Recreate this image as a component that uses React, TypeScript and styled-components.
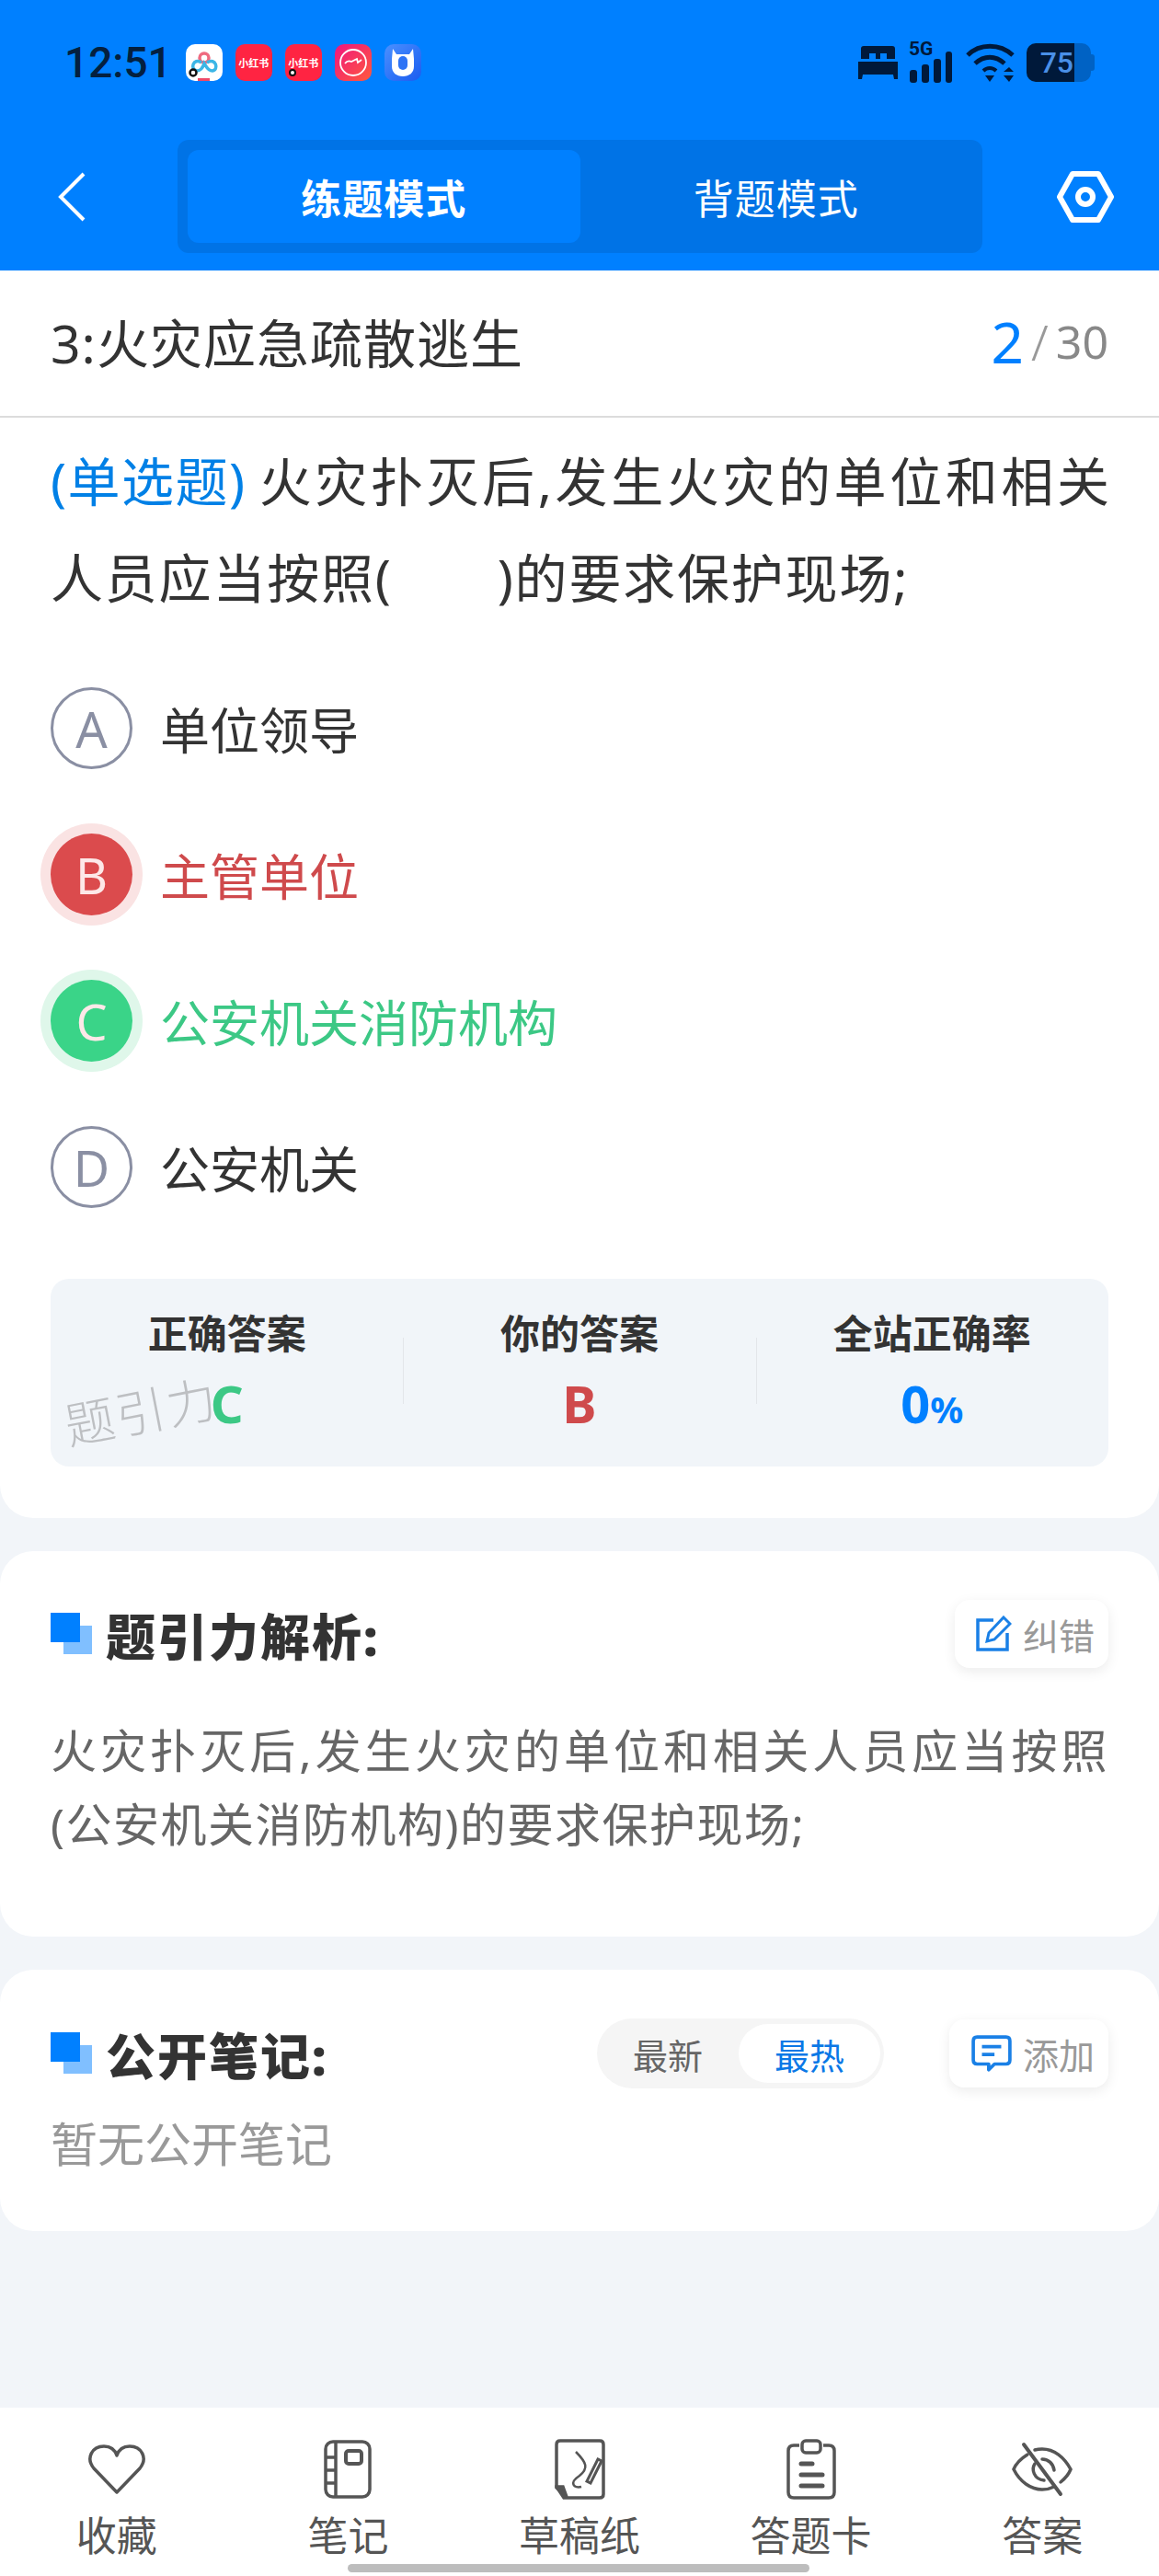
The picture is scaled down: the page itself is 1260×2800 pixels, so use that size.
import React from 'react'
import styled, { createGlobalStyle } from 'styled-components'

const FONT = `"Noto Sans", "Noto Sans CJK SC", sans-serif`

const GlobalStyle = createGlobalStyle`
  html, body { margin: 0; padding: 0; background: #f2f5f9; }
  * { box-sizing: border-box; }
  body { font-family: ${FONT}; }
`

const options = [
  { key: 'A', text: '单位领导', state: 'idle' },
  { key: 'B', text: '主管单位', state: 'wrong' },
  { key: 'C', text: '公安机关消防机构', state: 'right' },
  { key: 'D', text: '公安机关', state: 'idle' },
] as const

const tone = { idle: '#333333', wrong: '#cf4a4c', right: '#3cc885' }

const SectionMark = () => (
  <svg width="46" height="46" viewBox="0 0 46 46">
    <rect x="14" y="14" width="31" height="31" fill="#80bfff" />
    <rect x="0" y="0" width="32" height="32" fill="#0080ff" />
  </svg>
)

const Heart = () => (
  <svg width="64" height="58" viewBox="0 0 64 58" fill="none" stroke="#555" strokeWidth="3.5" strokeLinejoin="round">
    <path d="M32 54 L7 28 C-2 17 5 4 18 4 C25 4 30 8 32 14 C34 8 39 4 46 4 C59 4 66 17 57 28 Z" />
  </svg>
)

const Notebook = () => (
  <svg width="52" height="64" viewBox="0 0 52 64" fill="none" stroke="#555" strokeWidth="3.5">
    <rect x="2" y="2" width="48" height="60" rx="8" />
    <path d="M13 2 V62 M2 19 H13 M2 33 H13 M2 47 H13" />
    <rect x="24" y="12" width="17" height="14" rx="3" strokeWidth="4" />
  </svg>
)

const Draft = () => (
  <svg width="56" height="66" viewBox="0 0 56 66" fill="none" stroke="#555" strokeWidth="3.5">
    <path d="M11 64 H50 Q54 64 54 60 V6 Q54 2 50 2 H7 Q3 2 3 6 V52 Z" />
    <path d="M3 52 H10 L14 63 L3 53 Z" fill="#555" />
    <path d="M24 14 C36 26 38 32 28 40 C16 48 22 54 30 52" strokeWidth="2.5" />
    <path d="M52 24 L40 48 L36 46 L48 22 Z" strokeWidth="3" />
  </svg>
)

const AnswerCard = () => (
  <svg width="56" height="66" viewBox="0 0 56 66" fill="none" stroke="#555" strokeWidth="3.5">
    <path d="M15 7 H9 Q3 7 3 13 V58 Q3 64 9 64 H47 Q53 64 53 58 V13 Q53 7 47 7 H41" />
    <rect x="18" y="2" width="20" height="13" rx="4" strokeWidth="3.5" />
    <path d="M17 27 H29 M17 39 H40 M17 51 H40" strokeWidth="5" strokeLinecap="round" />
  </svg>
)

const EyeOff = () => (
  <svg width="68" height="60" viewBox="0 0 68 60" fill="none" stroke="#555" strokeWidth="3.5" strokeLinecap="round">
    <path d="M18 14 C10 19 5 25 3 30 C10 44 22 52 34 52 C39 52 43 51 47 49" />
    <path d="M26 9 C28.500 8.300 31 8 34 8 C47 8 58 17 65 30 C63 35 59 40 54 44" />
    <path d="M26 24 C22 30 25 41 36 42" />
    <path d="M34 19 C41 19 46 24 47 31" />
    <path d="M14 3 L54 57" strokeWidth="4" />
  </svg>
)

const navItems = [
  { label: '收藏', icon: <Heart /> },
  { label: '笔记', icon: <Notebook /> },
  { label: '草稿纸', icon: <Draft /> },
  { label: '答题卡', icon: <AnswerCard /> },
  { label: '答案', icon: <EyeOff /> },
]

const App = () => {
  return (
    <Page>
      <GlobalStyle />
      <Header>
        <StatusBar>
          <StatusLeft>
            <Time>12:51</Time>
            <AppIcons>
              <AppIcon $bg="#ffffff">
                <svg width="40" height="40" viewBox="0 0 40 40" fill="none">
                  <circle cx="20" cy="15" r="5" fill="#fff" stroke="#ef6a80" strokeWidth="3.500" />
                  <path d="M17 20 C8 14 4 28 12 29 C17 29 19 24 20 21 C22 24 24 29 29 29 C36 28 33 14 23 20" stroke="#3cb6e6" strokeWidth="3.500" />
                  <circle cx="8" cy="31" r="3.500" fill="#fff" stroke="#111" strokeWidth="2.500" />
                  <rect x="13" y="37" width="13" height="3" fill="#ef4a68" />
                </svg>
              </AppIcon>
              <AppIcon $bg="#ff2442"><RedText>小红书</RedText></AppIcon>
              <AppIcon $bg="#ff2442">
                <RedText>小红书</RedText>
                <Dot />
              </AppIcon>
              <AppIcon $bg="linear-gradient(135deg, #f0157f, #ff5a3c)">
                <svg width="40" height="40" viewBox="0 0 40 40" fill="none" stroke="#fff">
                  <circle cx="20" cy="20" r="14" strokeWidth="1.800" />
                  <path d="M11 21 Q14 17 18 19 L24 16 L25 20 L29 17" strokeWidth="1.800" />
                </svg>
              </AppIcon>
              <AppIcon $bg="linear-gradient(135deg, #4a90ff, #1a5cf0)">
                <svg width="40" height="40" viewBox="0 0 40 40" fill="none">
                  <path d="M9 5 L13 11 H27 L31 5 L32 16 V24 C32 31 27 35 20 35 C13 35 8 31 8 24 V16 Z" fill="#fff" />
                  <rect x="15" y="13" width="10" height="15" rx="5" fill="#2f74f5" />
                </svg>
              </AppIcon>
            </AppIcons>
          </StatusLeft>
          <StatusRight>
            <svg width="43" height="36" viewBox="0 0 43 36" fill="#00193a">
              <path d="M6 0 H37 Q40 0 40 3 V14 H31 V8 H24 V14 H19 V8 H12 V14 H3 V3 Q3 0 6 0 Z" />
              <path d="M0 17 H43 V36 H39 L38 31 H5 L4 36 H0 Z" />
            </svg>
            <SignalWrap>
              <SignalLabel>5G</SignalLabel>
              <svg width="48" height="34" viewBox="0 0 48 34" fill="#00193a">
                <rect x="1" y="20" width="8" height="14" rx="3" />
                <rect x="14" y="14" width="8" height="20" rx="3" />
                <rect x="27" y="8" width="8" height="26" rx="3" />
                <rect x="40" y="0" width="7" height="34" rx="3" />
              </svg>
            </SignalWrap>
            <svg width="54" height="44" viewBox="0 0 54 44" fill="none" stroke="#00193a" strokeWidth="5">
              <path d="M2 14 C15 1 37 1 51 14" />
              <path d="M10 23 C20 14 32 14 42 23" />
              <path d="M19 31 C23 27 29 27 33 31" strokeWidth="4" />
              <path d="M21 36 H31 L26 43 Z" fill="#00193a" stroke="none" />
              <path d="M41 31 L47 26 L52 31 Z M41 35 H52 L47 42 Z" transform="translate(0 1)" fill="#00193a" stroke="none" />
            </svg>
            <Battery>
              <BatteryFill>75</BatteryFill>
              <BatteryRest />
              <BatteryTip />
            </Battery>
          </StatusRight>
        </StatusBar>
        <NavRow>
          <BackButton>
            <svg width="30" height="54" viewBox="0 0 30 54" fill="none" stroke="#fff" strokeWidth="4">
              <path d="M28 2 L3 27 L28 52" />
            </svg>
          </BackButton>
          <ModeTabs>
            <ModeTab $active>练题模式</ModeTab>
            <ModeTab>背题模式</ModeTab>
          </ModeTabs>
          <SettingButton>
            <svg width="62" height="56" viewBox="0 0 62 56" fill="none" stroke="#fff" strokeWidth="6" strokeLinejoin="round">
              <path d="M17 3 H45 L59 28 L45 53 H17 L3 28 Z" />
              <circle cx="31" cy="28" r="8" />
            </svg>
          </SettingButton>
        </NavRow>
      </Header>

      <Content>
        <QuestionCard>
          <TitleRow>
            <ChapterTitle>3:火灾应急疏散逃生</ChapterTitle>
            <Counter>
              <CounterNow>2</CounterNow>
              <CounterSlash>/</CounterSlash>
              <CounterAll>30</CounterAll>
            </Counter>
          </TitleRow>
          <QuestionBody>
            <QuestionText>
              <QuestionType>(单选题)</QuestionType>火灾扑灭后,发生火灾的单位和相关<br />
              <LastLine $spacing={1.8}>人员应当按照(<QuestionBlank>　　</QuestionBlank>)的要求保护现场;</LastLine>
            </QuestionText>
            <OptionList>
              {options.map((o) => (
                <OptionRow key={o.key}>
                  <OptionBadge $state={o.state}>{o.key}</OptionBadge>
                  <OptionText $state={o.state}>{o.text}</OptionText>
                </OptionRow>
              ))}
            </OptionList>
            <StatsPanel>
              <StatCell>
                <StatLabel>正确答案</StatLabel>
                <StatValue $color="#3cc885">C</StatValue>
                <Watermark>题引力</Watermark>
              </StatCell>
              <StatCell $divider>
                <StatLabel>你的答案</StatLabel>
                <StatValue $color="#cf4a4c">B</StatValue>
              </StatCell>
              <StatCell $divider>
                <StatLabel>全站正确率</StatLabel>
                <StatValue $color="#0080ff">0<Percent>%</Percent></StatValue>
              </StatCell>
            </StatsPanel>
          </QuestionBody>
        </QuestionCard>

        <AnalysisCard>
          <SectionHead>
            <SectionTitle>
              <SectionMark />
              <SectionName>题引力解析:</SectionName>
            </SectionTitle>
            <ActionButton>
              <svg width="40" height="40" viewBox="0 0 40 40" fill="none" stroke="#1a80e6" strokeWidth="3.500">
                <path d="M20 5 H3 V37 H35 V19" />
                <path d="M31 2 L38 9 L21 26 L13 28 L15 19 Z" strokeWidth="3" />
              </svg>
              <ActionLabel>纠错</ActionLabel>
            </ActionButton>
          </SectionHead>
          <AnalysisText>
            火灾扑灭后,发生火灾的单位和相关人员应当按照<br />
            <LastLine $spacing={1.5}>(公安机关消防机构)的要求保护现场;</LastLine>
          </AnalysisText>
        </AnalysisCard>

        <NotesCard>
          <SectionHead>
            <SectionTitle>
              <SectionMark />
              <SectionName>公开笔记:</SectionName>
            </SectionTitle>
            <NotesActions>
              <SortToggle>
                <SortOption>最新</SortOption>
                <SortOption $active>最热</SortOption>
              </SortToggle>
              <ActionButton $wide>
                <svg width="44" height="40" viewBox="0 0 42 38" fill="none" stroke="#1a80e6" strokeWidth="3.500" strokeLinejoin="round">
                  <path d="M6 2 H36 Q40 2 40 6 V26 Q40 30 36 30 H24 L18 36 V30 H6 Q2 30 2 26 V6 Q2 2 6 2 Z" />
                  <path d="M11 12 H31 M11 20 H24" />
                </svg>
                <ActionLabel>添加</ActionLabel>
              </ActionButton>
            </NotesActions>
          </SectionHead>
          <EmptyNotes>暂无公开笔记</EmptyNotes>
        </NotesCard>
      </Content>

      <BottomBar>
        {navItems.map((item) => (
          <BottomItem key={item.label}>
            <BottomIcon>{item.icon}</BottomIcon>
            <BottomLabel>{item.label}</BottomLabel>
          </BottomItem>
        ))}
        <HomeIndicator />
      </BottomBar>
    </Page>
  )
}

export default App

const Page = styled.div`
  width: 1260px;
  height: 2800px;
  display: flex;
  flex-direction: column;
  background: #f2f5f9;
  overflow: hidden;
  font-family: ${FONT};
`
const Header = styled.div`
  height: 294px;
  background: #0080ff;
  flex-shrink: 0;
`
const StatusBar = styled.div`
  height: 136px;
  padding: 0 70px 0 70px;
  display: flex;
  align-items: center;
  justify-content: space-between;
`
const StatusLeft = styled.div`
  display: flex;
  align-items: center;
  gap: 15px;
`
const Time = styled.div`
  font-family: "Roboto", sans-serif;
  font-size: 46px;
  font-weight: 500;
  color: #04203f;
`
const AppIcons = styled.div`
  display: flex;
  gap: 14px;
`
const AppIcon = styled.div<{ $bg: string }>`
  width: 40px;
  height: 40px;
  border-radius: 10px;
  background: ${(p) => p.$bg};
  display: flex;
  align-items: center;
  justify-content: center;
  position: relative;
  overflow: hidden;
`
const RedText = styled.span`
  font-size: 11px;
  font-weight: 700;
  color: #fff;
  white-space: nowrap;
  font-family: "Noto Sans CJK SC", sans-serif;
`
const Dot = styled.span`
  position: absolute;
  left: 4px;
  bottom: 5px;
  width: 8px;
  height: 8px;
  border-radius: 50%;
  background: #fff;
  border: 2px solid #111;
`
const StatusRight = styled.div`
  display: flex;
  align-items: center;
  gap: 12px;
`
const SignalWrap = styled.div`
  width: 50px;
  height: 44px;
  display: flex;
  align-items: flex-end;
  position: relative;
`
const SignalLabel = styled.span`
  position: absolute;
  left: 0;
  top: -4px;
  font-family: "Roboto", sans-serif;
  font-size: 21px;
  line-height: 22px;
  font-weight: 700;
  color: #00193a;
`
const Battery = styled.div`
  display: flex;
  align-items: center;
  height: 42px;
  position: relative;
  width: 74px;
`
const BatteryFill = styled.div`
  width: 52px;
  height: 42px;
  background: #00193a;
  border-radius: 10px 0 0 10px;
  color: #4a90e8;
  font-family: "Roboto", sans-serif;
  font-size: 32px;
  font-weight: 500;
  line-height: 42px;
  text-align: right;
  padding-right: 1px;
`
const BatteryRest = styled.div`
  width: 18px;
  height: 42px;
  background: #0062c4;
  border-radius: 0 10px 10px 0;
`
const BatteryTip = styled.div`
  width: 4px;
  height: 18px;
  background: #0062c4;
  border-radius: 0 3px 3px 0;
`
const NavRow = styled.div`
  height: 158px;
  padding: 16px 0 19px;
  display: flex;
  align-items: stretch;
`
const BackButton = styled.div`
  width: 193px;
  padding-left: 63px;
  display: flex;
  align-items: center;
`
const ModeTabs = styled.div`
  width: 875px;
  padding: 11px;
  background: #0073e6;
  border-radius: 12px;
  display: flex;
`
const ModeTab = styled.div<{ $active?: boolean }>`
  flex: 1;
  border-radius: 12px;
  display: flex;
  align-items: center;
  justify-content: center;
  color: #fff;
  font-size: 44px;
  letter-spacing: 1px;
  font-weight: ${(p) => (p.$active ? 700 : 400)};
  background: ${(p) => (p.$active ? '#0080ff' : 'transparent')};
`
const SettingButton = styled.div`
  flex: 1;
  display: flex;
  align-items: center;
  justify-content: flex-end;
  padding-right: 49px;
`
const Content = styled.div`
  flex: 1;
  display: flex;
  flex-direction: column;
  gap: 36px;
`
const QuestionCard = styled.div`
  height: 1356px;
  background: #fff;
  border-radius: 0 0 36px 36px;
`
const TitleRow = styled.div`
  height: 160px;
  padding: 0 55px 5px;
  border-bottom: 2px solid #dcdcdc;
  display: flex;
  align-items: center;
  justify-content: space-between;
`
const ChapterTitle = styled.div`
  font-size: 57px;
  color: #333;
  letter-spacing: 1px;
`
const Counter = styled.div`
  display: flex;
  align-items: center;
  gap: 8px;
`
const CounterNow = styled.span`
  font-size: 62px;
  color: #0080ff;
`
const CounterSlash = styled.span`
  font-size: 54px;
  font-weight: 300;
  color: #999;
`
const CounterAll = styled.span`
  font-size: 50px;
  color: #888;
`
const QuestionBody = styled.div`
  padding: 17px 55px 0;
`
const QuestionText = styled.div`
  font-size: 57px;
  line-height: 105px;
  color: #333;
  letter-spacing: 3.6px;
  white-space: nowrap;
`
const QuestionType = styled.span`
  color: #0080e6;
  letter-spacing: 1.5px;
  margin-right: 14px;
`
const LastLine = styled.span<{ $spacing: number }>`
  letter-spacing: ${(p) => p.$spacing}px;
`
const QuestionBlank = styled.span`
  letter-spacing: 0;
`
const OptionList = styled.div`
  margin-top: 66px;
  display: flex;
  flex-direction: column;
  gap: 70px;
`
const OptionRow = styled.div`
  display: flex;
  align-items: center;
  gap: 30px;
`
const OptionBadge = styled.div<{ $state: 'idle' | 'wrong' | 'right' }>`
  width: 89px;
  height: 89px;
  border-radius: 50%;
  display: flex;
  align-items: center;
  justify-content: center;
  font-size: 54px;
  font-weight: 400;
  border: ${(p) => (p.$state === 'idle' ? '3px solid #8a8fa3' : 'none')};
  color: ${(p) => (p.$state === 'idle' ? '#8a8fa3' : '#fde8e8')};
  background: ${(p) => (p.$state === 'wrong' ? '#db4b4d' : p.$state === 'right' ? '#3ad488' : 'transparent')};
  box-shadow: ${(p) =>
    p.$state === 'wrong' ? '0 0 0 11px #fae3e3' : p.$state === 'right' ? '0 0 0 11px #dff7ea' : 'none'};
`
const OptionText = styled.div<{ $state: 'idle' | 'wrong' | 'right' }>`
  font-size: 54px;
  color: ${(p) => tone[p.$state]};
`
const StatsPanel = styled.div`
  margin-top: 77px;
  height: 204px;
  background: #f1f5f9;
  border-radius: 20px;
  display: grid;
  grid-template-columns: repeat(3, 1fr);
  padding-top: 34px;
`
const StatCell = styled.div<{ $divider?: boolean }>`
  height: 105px;
  display: flex;
  flex-direction: column;
  align-items: center;
  position: relative;
  &::before {
    content: '';
    display: ${(p) => (p.$divider ? 'block' : 'none')};
    position: absolute;
    left: 0;
    top: 30px;
    width: 1px;
    height: 72px;
    background: #e3e6ea;
  }
`
const StatLabel = styled.div`
  font-size: 43px;
  line-height: 52px;
  font-weight: 700;
  color: #333;
`
const StatValue = styled.div<{ $color: string }>`
  margin-top: 16px;
  font-size: 56px;
  line-height: 66px;
  font-weight: 700;
  color: ${(p) => p.$color};
`
const Percent = styled.span`
  font-size: 40px;
`
const Watermark = styled.div`
  position: absolute;
  left: 14px;
  top: 68px;
  font-size: 54px;
  font-weight: 300;
  letter-spacing: 2px;
  color: #bdbfc2;
  transform: rotate(-11deg);
  white-space: nowrap;
`
const AnalysisCard = styled.div`
  height: 419px;
  background: #fff;
  border-radius: 36px;
  padding: 53px 55px 0;
`
const NotesCard = styled.div`
  height: 284px;
  background: #fff;
  border-radius: 36px;
  padding: 54px 55px 0;
`
const SectionHead = styled.div`
  height: 74px;
  display: flex;
  align-items: center;
  justify-content: space-between;
`
const SectionTitle = styled.div`
  display: flex;
  align-items: center;
  gap: 14px;
`
const SectionName = styled.div`
  font-size: 54px;
  font-weight: 900;
  color: #333;
  letter-spacing: 2px;
`
const ActionButton = styled.div<{ $wide?: boolean }>`
  height: 74px;
  padding: 0 15px 0 ${(p) => (p.$wide ? '24px' : '22px')};
  background: #fff;
  border-radius: 16px;
  box-shadow: 0 4px 14px rgba(0, 0, 0, 0.08);
  display: flex;
  align-items: center;
  gap: 12px;
`
const ActionLabel = styled.span`
  font-size: 39px;
  color: #999;
`
const AnalysisText = styled.div`
  margin-top: 50px;
  font-size: 50px;
  line-height: 80px;
  color: #666;
  letter-spacing: 4.05px;
  white-space: nowrap;
`
const NotesActions = styled.div`
  display: flex;
  align-items: center;
  gap: 71px;
`
const SortToggle = styled.div`
  height: 76px;
  width: 312px;
  padding: 6px 4px 6px 0;
  background: #f5f5f5;
  border-radius: 38px;
  display: flex;
  justify-content: flex-end;
`
const SortOption = styled.div<{ $active?: boolean }>`
  width: 154px;
  border-radius: 32px;
  display: flex;
  align-items: center;
  justify-content: center;
  font-size: 38px;
  color: ${(p) => (p.$active ? '#0a78e6' : '#666')};
  background: ${(p) => (p.$active ? '#fff' : 'transparent')};
`
const EmptyNotes = styled.div`
  margin-top: 22px;
  font-size: 51px;
  color: #999;
`
const BottomBar = styled.div`
  height: 183px;
  background: #fff;
  flex-shrink: 0;
  padding: 0 1px;
  display: grid;
  grid-template-columns: repeat(5, 1fr);
  position: relative;
`
const BottomItem = styled.div`
  display: flex;
  flex-direction: column;
  align-items: center;
`
const BottomIcon = styled.div`
  height: 95px;
  margin-top: 19px;
  display: flex;
  align-items: center;
  justify-content: center;
`
const BottomLabel = styled.div`
  font-size: 44px;
  line-height: 50px;
  color: #555;
`
const HomeIndicator = styled.div`
  position: absolute;
  left: 378px;
  bottom: 4px;
  width: 502px;
  height: 9px;
  border-radius: 5px;
  background: #bdbdbd;
`
